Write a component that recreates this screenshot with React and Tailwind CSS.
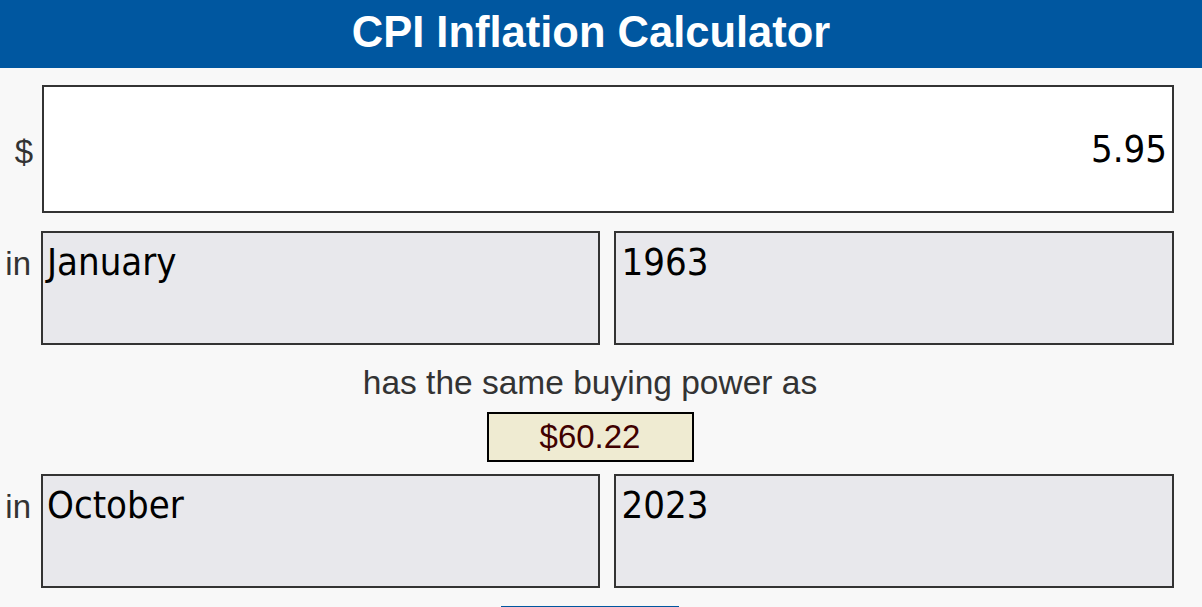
export default function App() {
  const arial = { fontFamily: '"Liberation Sans", Arial, sans-serif' };
  const boxFont = '[font-family:"DejaVu_Sans_Condensed","DejaVu_Sans",sans-serif]';
  return (
    <div className="min-h-[607px] w-full bg-[#f8f8f8] overflow-hidden" style={arial}>
      <div className="h-[68px] bg-[#0057a0] flex items-center justify-center">
        <h1 className="text-white font-bold text-[43.5px] leading-none mt-[-3px] pr-[20px]">CPI Inflation Calculator</h1>
      </div>

      <div className="pt-[17px] pr-[28px]">
        <div className="flex items-center">
          <div className="w-[42px] shrink-0 pr-[9px] mt-[6px] text-right text-[33px] text-[#333]">$</div>
          <div className={`flex-1 h-[128px] bg-white border-2 border-[#333] flex items-center justify-end pr-[5px] text-[38px] leading-[38px] text-black ${boxFont}`}>
            5.95
          </div>
        </div>

        <div className="flex items-baseline mt-[18px]">
          <div className="w-[41px] shrink-0 pr-[10px] text-right text-[33px] text-[#333]">in</div>
          <div className="flex-1 flex gap-[14px]">
            <div className={`flex-1 h-[114px] bg-[#e8e8ec] border-2 border-[#333] pt-[10px] pl-[4px] text-[38px] leading-[38px] text-black ${boxFont}`}>January</div>
            <div className={`flex-1 h-[114px] bg-[#e8e8ec] border-2 border-[#333] pt-[10px] pl-[6px] text-[38px] leading-[38px] text-black ${boxFont}`}>1963</div>
          </div>
        </div>

        <div className="pl-[6px] flex flex-col items-center">
          <div className="mt-[19px] text-[33.5px] leading-[38px] text-[#333]">has the same buying power as</div>
          <div className="mt-[10px] w-[207px] h-[50px] bg-[#efebd2] border-2 border-black flex items-center justify-center text-[33px] text-[#400000]">$60.22</div>
        </div>

        <div className="flex items-baseline mt-[12px]">
          <div className="w-[41px] shrink-0 pr-[10px] text-right text-[33px] text-[#333]">in</div>
          <div className="flex-1 flex gap-[14px]">
            <div className={`flex-1 h-[114px] bg-[#e8e8ec] border-2 border-[#333] pt-[10px] pl-[4px] text-[38px] leading-[38px] text-black ${boxFont}`}>October</div>
            <div className={`flex-1 h-[114px] bg-[#e8e8ec] border-2 border-[#333] pt-[10px] pl-[6px] text-[38px] leading-[38px] text-black ${boxFont}`}>2023</div>
          </div>
        </div>

        <div className="pl-[6px] flex justify-center mt-[18px]">
          <div className="w-[178px] h-[40px] bg-[#0057a0]"></div>
        </div>
      </div>
    </div>
  );
}
